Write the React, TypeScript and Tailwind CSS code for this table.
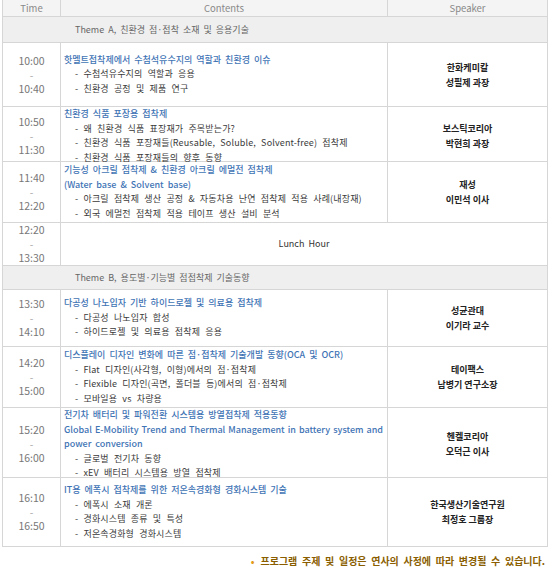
import React from "react";

type RowProps = {
  h: string;
  start: string;
  end: string;
  speaker?: [string, string];
  children: React.ReactNode;
};

function Title({ children, justify }: { children: React.ReactNode; justify?: boolean }) {
  return (
    <div
      className={
        justify
          ? "text-[#3f74b5] font-medium text-justify [text-align-last:justify] whitespace-nowrap"
          : "text-[#3f74b5] font-medium whitespace-nowrap [word-spacing:2px]"
      }
    >
      {children}
    </div>
  );
}

function Item({ children }: { children: React.ReactNode }) {
  return (
    <div className="pl-[11px] text-[#3a3a3a] whitespace-nowrap tracking-[0.15px] [word-spacing:3px]">- {children}</div>
  );
}

function Row({ h, start, end, speaker, children }: RowProps) {
  return (
    <div className={`grid grid-cols-[58px_327px_1fr] border-b border-[#d6d6d6] ${h}`}>
      <div className="flex flex-col items-center justify-center border-r border-[#d6d6d6] text-[10.5px] leading-[14px] text-[#777]">
        <span>{start}</span>
        <span className="text-[#aaa]">-</span>
        <span>{end}</span>
      </div>
      <div className="flex flex-col justify-center border-r border-[#d6d6d6] pl-[3px] pr-[4px] text-[9px] leading-[14.5px]">
        {children}
      </div>
      <div className="flex flex-col items-center justify-center text-[9px] font-bold leading-[15px] text-[#222]">
        {speaker && (
          <>
            <span>{speaker[0]}</span>
            <span>{speaker[1]}</span>
          </>
        )}
      </div>
    </div>
  );
}

function Theme({ h, children }: { h: string; children: React.ReactNode }) {
  return (
    <div className={`flex items-center border-b border-[#d6d6d6] bg-[#efefef] pl-[72px] text-[9px] text-[#666] [word-spacing:2px] ${h}`}>
      {children}
    </div>
  );
}

export default function App() {
  return (
    <div className="w-[550px] h-[571px] bg-white font-['Noto_Sans_CJK_KR','Noto_Sans',sans-serif] overflow-hidden">
      <div className="ml-[2px] w-[546px] border-x border-[#d6d6d6]">
        <div className="grid h-[17px] grid-cols-[58px_327px_1fr] border-b border-[#d6d6d6] bg-[#f4f4f4] text-[9.5px] text-[#888]">
          <div className="flex items-center justify-center border-r border-[#d6d6d6]">Time</div>
          <div className="flex items-center justify-center border-r border-[#d6d6d6]">Contents</div>
          <div className="flex items-center justify-center">Speaker</div>
        </div>

        <Theme h="h-[26px]">Theme A, 친환경 점·접착 소재 및 응용기술</Theme>

        <Row h="h-[64px]" start="10:00" end="10:40" speaker={["한화케미칼", "성필제 과장"]}>
          <Title>핫멜트접착제에서 수첨석유수지의 역할과 친환경 이슈</Title>
          <Item>수첨석유수지의 역할과 응용</Item>
          <Item>친환경 공정 및 제품 연구</Item>
        </Row>

        <Row h="h-[55px]" start="10:50" end="11:30" speaker={["보스틱코리아", "박현희 과장"]}>
          <Title>친환경 식품 포장용 접착제</Title>
          <Item>왜 친환경 식품 표장재가 주목받는가?</Item>
          <Item>친환경 식품 포장재들(Reusable, Soluble, Solvent-free) 접착제</Item>
          <Item>친환경 식품 포장재들의 향후 동향</Item>
        </Row>

        <Row h="h-[61px]" start="11:40" end="12:20" speaker={["재성", "이민석 이사"]}>
          <Title>기능성 아크릴 점착제 &amp; 친환경 아크릴 에멀전 점착제</Title>
          <Title>(Water base &amp; Solvent base)</Title>
          <Item>아크릴 점착제 생산 공정 &amp; 자동차용 난연 점착제 적용 사례(내장재)</Item>
          <Item>외국 에멀전 점착제 적용 테이프 생산 설비 분석</Item>
        </Row>

        <div className="grid h-[43px] grid-cols-[58px_1fr] border-b border-[#d6d6d6]">
          <div className="flex flex-col items-center justify-center border-r border-[#d6d6d6] text-[10.5px] leading-[14px] text-[#777]">
            <span>12:20</span>
            <span className="text-[#aaa]">-</span>
            <span>13:30</span>
          </div>
          <div className="flex items-center justify-center text-[9px] text-[#333] [word-spacing:2px]">Lunch Hour</div>
        </div>

        <Theme h="h-[24px]">Theme B, 용도별·기능별 점접착제 기술동향</Theme>

        <Row h="h-[57px]" start="13:30" end="14:10" speaker={["성균관대", "이기라 교수"]}>
          <Title>다공성 나노입자 기반 하이드로젤 및 의료용 접착제</Title>
          <Item>다공성 나노입자 합성</Item>
          <Item>하이드로젤 및 의료용 접착제 응용</Item>
        </Row>

        <Row h="h-[61px]" start="14:20" end="15:00" speaker={["테이팩스", "남병기 연구소장"]}>
          <Title>디스플레이 디자인 변화에 따른 점·접착제 기술개발 동향(OCA 및 OCR)</Title>
          <Item>Flat 디자인(사각형, 이형)에서의 점·접착제</Item>
          <Item>Flexible 디자인(곡면, 폴더블 등)에서의 점·접착제</Item>
          <Item>모바일용 vs 차량용</Item>
        </Row>

        <Row h="h-[70px]" start="15:20" end="16:00" speaker={["헨켈코리아", "오덕근 이사"]}>
          <Title>전기차 배터리 및 파워전환 시스템용 방열접착제 적용동향</Title>
          <Title justify>Global E-Mobility Trend and Thermal Management in battery system and</Title>
          <Title>power conversion</Title>
          <Item>글로벌 전기차 동향</Item>
          <Item>xEV 배터리 시스템용 방열 접착제</Item>
        </Row>

        <Row h="h-[69px]" start="16:10" end="16:50" speaker={["한국생산기술연구원", "최정호 그룹장"]}>
          <Title>IT용 에폭시 접착제를 위한 저온속경화형 경화시스템 기술</Title>
          <Item>에폭시 소재 개론</Item>
          <Item>경화시스템 종류 및 특성</Item>
          <Item>저온속경화형 경화시스템</Item>
        </Row>
      </div>

      <div className="flex justify-end pr-[5px] pt-[6px] text-[10px] font-bold text-[#8a5e00] [word-spacing:2.4px]">
        <span className="mr-[6px] text-[#e39a1b]">•</span>
        <span>프로그램 주제 및 일정은 연사의 사정에 따라 변경될 수 있습니다.</span>
      </div>
    </div>
  );
}
